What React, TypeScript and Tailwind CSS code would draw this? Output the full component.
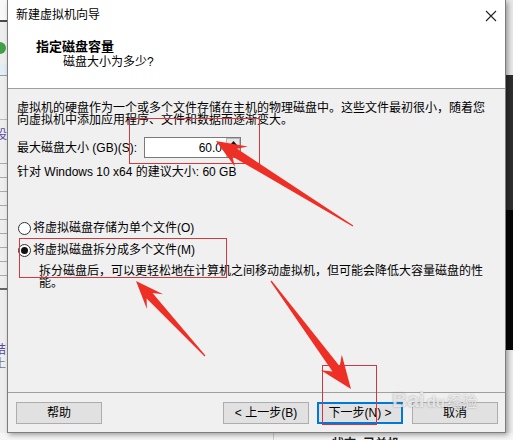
import React from "react";

type P = [number, number];

function arrowPts(t: P, h: P, headLen: number, headW: number, shaftW: number): string {
  const [x1, y1] = t;
  const [x2, y2] = h;
  const dx = x2 - x1;
  const dy = y2 - y1;
  const L = Math.hypot(dx, dy);
  const ux = dx / L;
  const uy = dy / L;
  const nx = -uy;
  const ny = ux;
  const bx = x2 - ux * headLen;
  const by = y2 - uy * headLen;
  const pts: P[] = [
    [x1 + nx * 0.6, y1 + ny * 0.6],
    [bx + nx * (shaftW / 2) + ux * 5, by + ny * (shaftW / 2) + uy * 5],
    [bx + nx * (headW / 2) - ux * 3, by + ny * (headW / 2) - uy * 3],
    [x2, y2],
    [bx - nx * (headW / 2) - ux * 3, by - ny * (headW / 2) - uy * 3],
    [bx - nx * (shaftW / 2) + ux * 5, by - ny * (shaftW / 2) + uy * 5],
    [x1 - nx * 0.6, y1 - ny * 0.6],
  ];
  return pts.map((p) => `${p[0].toFixed(1)},${p[1].toFixed(1)}`).join(" ");
}

function Btn({ children, primary }: { children: React.ReactNode; primary?: boolean }) {
  return (
    <div
      className={
        primary
          ? "w-[86px] h-[22px] bg-[#e1e1e1] border-2 border-[#0078d7] flex items-center justify-center"
          : "w-[86px] h-[22px] bg-[#e1e1e1] border border-[#adadad] flex items-center justify-center"
      }
    >
      {children}
    </div>
  );
}

function LeftStrip() {
  return (
    <div className="w-[7px] h-[433px] flex flex-col bg-[#eeeeee] overflow-hidden">
      <div className="h-[22px] bg-[#f8f8f8] border-b-2 border-[#4a4a4a]" />
      <div className="h-[20px]" />
      <div className="h-[12px] w-[6px] rounded-r-full bg-[#43a047]" />
      <div className="h-[10px]" />
      <div className="h-[12px] border-b border-[#8aa0b8] bg-[#e4ecf4]" />
      <div className="h-[44px] border-b border-[#bbbbbb]" />
      <div className="h-[30px] flex items-center">
        <span className="text-[12px] leading-[12px] text-[#5a4aa8] -ml-[5px]">设</span>
      </div>
      <div className="h-[14px] border-b border-[#aaaaaa]" />
      <div className="h-[14px] border-b border-[#aaaaaa]" />
      <div className="h-[14px] border-b border-[#aaaaaa]" />
      <div className="h-[14px] border-b border-[#aaaaaa]" />
      <div className="h-[14px] border-b border-[#aaaaaa]" />
      <div className="h-[14px] border-b border-[#aaaaaa]" />
      <div className="h-[14px] border-b border-[#aaaaaa]" />
      <div className="h-[14px] border-b border-[#aaaaaa]" />
      <div className="h-[14px] border-b border-[#aaaaaa]" />
      <div className="h-[14px] border-b-2 border-[#666666]" />
      <div className="h-[53px] shrink-0" />
      <div className="h-[14px] shrink-0 flex items-center">
        <span className="text-[12px] leading-[12px] text-[#5a4aa8] -ml-[6px]">结</span>
      </div>
      <div className="h-[14px] shrink-0 flex items-center">
        <span className="text-[12px] leading-[12px] text-[#777777] -ml-[6px]">土</span>
      </div>
      <div className="flex-1" />
    </div>
  );
}

function RightStrip() {
  return (
    <div className="w-[7px] h-[433px] flex flex-col">
      <div className="h-[75px] bg-[#e8e8e8]" />
      <div className="h-[135px] bg-[#2e2e2e]" />
      <div className="h-[140px] bg-[#060606]" />
      <div className="flex-1 bg-[#ececec]" />
    </div>
  );
}

export default function App() {
  const a1 = arrowPts([353, 226], [216, 141], 27, 24, 9);
  const a2 = arrowPts([205, 356], [136, 281], 25, 22, 8);
  const a3 = arrowPts([271, 281], [351, 389], 30, 26, 9);
  return (
    <div className="relative w-[513px] h-[440px] overflow-hidden bg-[#f3f3f3] text-black text-[12px] leading-[12px] font-[family-name:'Liberation_Sans','Noto_Sans_CJK_SC',sans-serif]">
      <div className="flex h-[433px]">
        <LeftStrip />
        <div className="relative z-10 w-[499px] h-[433px] border border-t-0 border-[#7d7d7d] flex flex-col bg-[#f0f0f0] shadow-[2px_2px_5px_rgba(0,0,0,0.35)]">
          {/* title bar */}
          <div className="h-[30px] bg-white flex items-center pl-[8px] pr-[8px]">
            <span className="text-[12px] leading-[14px]">新建虚拟机向导</span>
            <div className="flex-1" />
            <svg width="12" height="12" viewBox="0 0 12 12" className="mt-[1px]">
              <path d="M1 1 L11 11 M11 1 L1 11" stroke="#222" strokeWidth="1.1" fill="none" />
            </svg>
          </div>
          {/* header */}
          <div className="h-[59px] bg-white border-b border-[#a0a0a0] pt-[9px]">
            <div className="pl-[28px] text-[13px] leading-[16px] font-bold">指定磁盘容量</div>
            <div className="pl-[55px] text-[12px] leading-[14px]">磁盘大小为多少?</div>
          </div>
          {/* body */}
          <div className="h-[304px] border-b border-[#a0a0a0] pt-[13px] pl-[9px] flex flex-col">
            <div className="leading-[12px]">
              虚拟机的硬盘作为一个或多个文件存储在主机的物理磁盘中。这些文件最初很小，随着您
              <br />
              向虚拟机中添加应用程序、文件和数据而逐渐变大。
            </div>
            <div className="mt-[11px] flex items-center h-[21px]">
              <div className="w-[127px]">最大磁盘大小 (GB)(S):</div>
              <div className="w-[97px] h-[21px] border border-[#7a7a7a] bg-white flex">
                <div className="flex-1 flex items-center justify-end pr-[4px] text-[12px]">60.0</div>
                <div className="w-[14px] flex flex-col">
                  <div className="h-[10px] bg-[#e6e6e6] border border-[#b8b8b8] flex items-center justify-center">
                    <svg width="7" height="4" viewBox="0 0 7 4">
                      <path d="M0 4 L3.5 0 L7 4 Z" fill="#111" />
                    </svg>
                  </div>
                  <div className="flex-1 bg-[#e6e6e6] border border-t-0 border-[#b8b8b8] flex items-center justify-center">
                    <svg width="7" height="4" viewBox="0 0 7 4">
                      <path d="M0 0 L3.5 4 L7 0 Z" fill="#111" />
                    </svg>
                  </div>
                </div>
              </div>
            </div>
            <div className="mt-[8px]">针对 Windows 10 x64 的建议大小: 60 GB</div>
            <div className="mt-[43px] h-[14px] flex items-center">
              <div className="ml-[1px] w-[13px] h-[13px] rounded-full border border-[#333333] bg-white" />
              <span className="ml-[2px]">将虚拟磁盘存储为单个文件(O)</span>
            </div>
            <div className="mt-[8px] h-[14px] flex items-center">
              <div className="ml-[1px] w-[13px] h-[13px] rounded-full border border-[#333333] bg-white flex items-center justify-center">
                <div className="w-[7px] h-[7px] rounded-full bg-[#111111]" />
              </div>
              <span className="ml-[2px]">将虚拟磁盘拆分成多个文件(M)</span>
            </div>
            <div className="mt-[8px] pl-[22px] leading-[12px]">
              拆分磁盘后，可以更轻松地在计算机之间移动虚拟机，但可能会降低大容量磁盘的性
              <br />
              能。
            </div>
          </div>
          {/* footer */}
          <div className="h-[39px] pt-[9px] pl-[8px] pr-[7px] flex items-start">
            <Btn>帮助</Btn>
            <div className="flex-1" />
            <Btn>&lt; 上一步(B)</Btn>
            <div className="w-[8px]" />
            <Btn primary>下一步(N) &gt;</Btn>
            <div className="w-[9px]" />
            <Btn>取消</Btn>
          </div>
        </div>
        <RightStrip />
      </div>
      {/* bottom strip of background window */}
      <div className="h-[7px] flex overflow-hidden bg-[#f5f5f5]">
        <div className="w-[273px]" />
        <div className="w-[1px] bg-[#cfcfcf]" />
        <div className="ml-[58px] pt-[5px] font-bold text-[#222]">状态: 已关机</div>
      </div>

      {/* Baidu watermark */}
      <div className="absolute left-[392px] top-[389px] z-20 flex items-end text-white/70 [text-shadow:0_0_2px_rgba(120,120,120,0.7)]">
        <span className="text-[21px] leading-[22px] font-bold">Bai</span>
        <span className="text-[15px] leading-[18px] font-bold ml-[2px]">du</span>
        <span className="text-[15px] leading-[18px] ml-[2px]">经验</span>
      </div>

      {/* red annotation boxes */}
      <div className="absolute z-20 left-[129px] top-[118px] w-[131px] h-[46px] border border-[#d23a3f]" />
      <div className="absolute z-20 left-[19px] top-[238px] w-[208px] h-[40px] border border-[#d23a3f]" />
      <div className="absolute z-20 left-[322px] top-[365px] w-[55px] h-[60px] border border-[#c8384a]" />

      {/* red arrows */}
      <svg className="absolute inset-0 z-30 pointer-events-none" width="513" height="440" viewBox="0 0 513 440">
        <polygon points={a1} fill="#ee2f26" />
        <polygon points={a2} fill="#ee2f26" />
        <polygon points={a3} fill="#ee2f26" />
      </svg>
    </div>
  );
}
